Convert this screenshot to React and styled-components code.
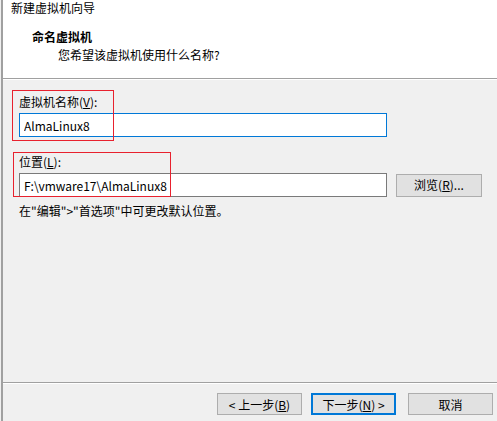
import React from "react";
import styled, { createGlobalStyle } from "styled-components";

const GlobalStyle = createGlobalStyle`
  html, body {
    margin: 0;
    padding: 0;
    background: #f0f0f0;
  }
  body {
    font-family: "Noto Sans CJK SC", "Liberation Sans", sans-serif;
    font-size: 12px;
    color: #000;
  }
`;

const Window = styled.div`
  width: 497px;
  height: 421px;
  display: flex;
  flex-direction: column;
  box-sizing: border-box;
  border-left: 2px solid #a0a0a0;
  margin-left: 1px;
  width: 496px;
  overflow: hidden;
`;

const Header = styled.div`
  background: #fff;
  height: 78px;
  box-sizing: border-box;
  line-height: 16px;
`;

const Title = styled.div`
  padding-left: 8px;
  height: 16px;
`;

const Heading = styled.div`
  margin-top: 13px;
  padding-left: 29px;
  font-weight: bold;
`;

const SubHeading = styled.div`
  margin-top: 2px;
  padding-left: 55px;
`;

const Rule = styled.div`
  height: 1px;
  background: #a0a0a0;
  border-bottom: 1px solid #fff;
`;

const Content = styled.div`
  flex: 1;
  padding: 14px 0 0 16px;
  line-height: 16px;
`;

const Group = styled.div`
  position: relative;
  margin-top: ${(p) => p.$top || 0}px;
`;

const Label = styled.div`
  height: 16px;
  margin-bottom: 3px;
`;

const Key = styled.span`
  text-decoration: underline;
`;

const Row = styled.div`
  display: flex;
  align-items: center;
  gap: 9px;
`;

const TextBox = styled.input`
  width: 368px;
  height: 24px;
  box-sizing: border-box;
  border: 1px solid ${(p) => (p.$focused ? "#0078d7" : "#7a7a7a")};
  background: #fff;
  padding: 0 4px;
  margin: 0;
  font-family: "Noto Sans CJK SC", "Liberation Sans", sans-serif;
  font-size: 12px;
  color: #000;
  outline: none;
`;

const Button = styled.div`
  width: ${(p) => p.$width || 85}px;
  height: ${(p) => p.$height || 22}px;
  box-sizing: border-box;
  border: ${(p) => (p.$default ? "2px solid #0078d7" : "1px solid #adadad")};
  background: #e1e1e1;
  display: flex;
  align-items: center;
  justify-content: center;
  margin-left: ${(p) => p.$gap || 0}px;
  white-space: pre;
  flex-shrink: 0;
`;

const Hint = styled.div`
  margin-top: 6px;
`;

const Marker = styled.div`
  position: absolute;
  left: ${(p) => p.$x}px;
  top: ${(p) => p.$y}px;
  width: ${(p) => p.$w}px;
  height: ${(p) => p.$h}px;
  border: 1px solid #e8212e;
  box-sizing: border-box;
  pointer-events: none;
`;

const Footer = styled.div`
  height: 37px;
  display: flex;
  justify-content: flex-end;
  padding: 9px 4px 0 0;
  box-sizing: border-box;
`;

export default function App() {
  return (
    <>
      <GlobalStyle />
      <Window>
        <Header>
          <Title>新建虚拟机向导</Title>
          <Heading>命名虚拟机</Heading>
          <SubHeading>您希望该虚拟机使用什么名称?</SubHeading>
        </Header>
        <Rule />
        <Content>
          <Group>
            <Label>
              虚拟机名称(<Key>V</Key>):
            </Label>
            <TextBox $focused readOnly defaultValue="AlmaLinux8" />
            <Marker $x={-7} $y={-4} $w={102} $h={51} />
          </Group>
          <Group $top={17}>
            <Label>
              位置(<Key>L</Key>):
            </Label>
            <Row>
              <TextBox readOnly defaultValue="F:\vmware17\AlmaLinux8" />
              <Button $width={86} $height={23}>
                浏览(<Key>R</Key>)...
              </Button>
            </Row>
            <Marker $x={-6} $y={-2} $w={158} $h={45} />
          </Group>
          <Hint>在"编辑"&gt;"首选项"中可更改默认位置。</Hint>
        </Content>
        <Rule />
        <Footer>
          <Button>
            {"< 上一步("}<Key>B</Key>)
          </Button>
          <Button $default $gap={9}>
            下一步(<Key>N</Key>){" >"}
          </Button>
          <Button $gap={12}>取消</Button>
        </Footer>
      </Window>
    </>
  );
}
